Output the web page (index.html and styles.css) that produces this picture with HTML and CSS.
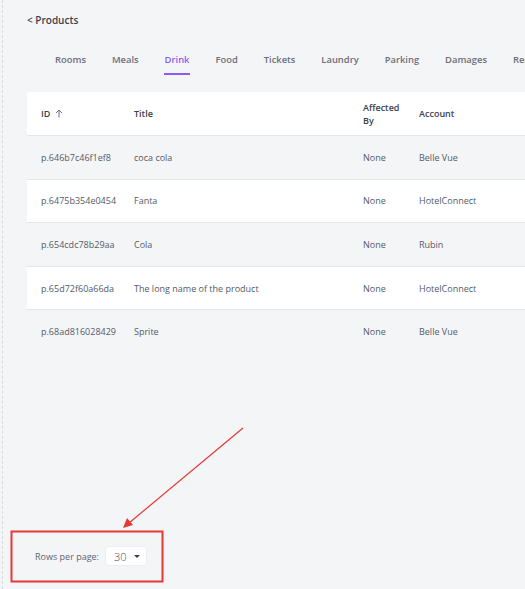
FILE: index.html
```html
<!DOCTYPE html>
<html lang="en">
<head>
<meta charset="utf-8">
<title>Products</title>
<link rel="stylesheet" href="styles.css">
</head>
<body>
<div class="page">
  <a class="back" href="#">&lt; Products</a>
  <nav class="tabs">
    <span class="tab">Rooms</span>
    <span class="tab">Meals</span>
    <span class="tab active">Drink</span>
    <span class="tab">Food</span>
    <span class="tab">Tickets</span>
    <span class="tab">Laundry</span>
    <span class="tab">Parking</span>
    <span class="tab">Damages</span>
    <span class="tab">Rent</span>
  </nav>
  <table class="grid">
    <colgroup>
      <col class="c-id"><col class="c-title"><col class="c-aff"><col class="c-acc">
    </colgroup>
    <thead>
      <tr><th>ID <svg class="sort" width="8" height="9" viewBox="0 0 8 9"><path d="M4 8.5V1M1 4L4 1L7 4" fill="none" stroke="#6b6f7b" stroke-width="1"/></svg></th><th>Title</th><th>Affected<br>By</th><th>Account</th></tr>
    </thead>
    <tbody>
      <tr><td>p.646b7c46f1ef8</td><td>coca cola</td><td>None</td><td>Belle Vue</td></tr>
      <tr><td>p.6475b354e0454</td><td>Fanta</td><td>None</td><td>HotelConnect</td></tr>
      <tr><td>p.654cdc78b29aa</td><td>Cola</td><td>None</td><td>Rubin</td></tr>
      <tr><td>p.65d72f60a66da</td><td>The long name of the product</td><td>None</td><td>HotelConnect</td></tr>
      <tr><td>p.68ad816028429</td><td>Sprite</td><td>None</td><td>Belle Vue</td></tr>
    </tbody>
  </table>
  <div class="pager">
    <span class="pager-label">Rows per page:</span>
    <span class="select">30 <span class="caret"></span></span>
  </div>
</div>
<svg class="annot" width="525" height="589" viewBox="0 0 525 589">
  <line x1="243" y1="428" x2="129" y2="523" stroke="#e53935" stroke-width="1.2"/>
  <polygon points="123,528 127,518 133,525" fill="#e53935"/>
  <rect x="11.5" y="531.5" width="151" height="50" fill="none" stroke="#e53935" stroke-width="2"/>
</svg>
</body>
</html>
```
FILE: styles.css
```css
html, body {
  margin: 0;
  padding: 0;
  height: 100%;
  overflow: hidden;
}
body {
  background: #f4f5f7;
  font-family: "Open Sans", "Liberation Sans", sans-serif;
  color: #3d4250;
  position: relative;
}
.page {
  box-sizing: border-box;
  height: 589px;
  margin-left: 2px;
  border-left: 1px dashed #d9dbe0;
  padding: 13px 0 23px 24px;
  display: flex;
  flex-direction: column;
  width: 700px;
}
.back {
  font-size: 10px;
  font-weight: 600;
  color: #3a3f4b;
  text-decoration: none;
  line-height: 14px;
}
.tabs {
  display: flex;
  gap: 24px;
  margin: 26px 0 0 27px;
}
.tab {
  font-size: 9.4px;
  font-weight: 600;
  color: #6b6f7b;
  padding: 0 1px 6px;
  line-height: 14px;
  border-bottom: 2px solid transparent;
}
.tab.active {
  color: #8b5cf6;
  border-bottom-color: #8b5cf6;
}
.grid {
  margin-top: 17px;
  width: 640px;
  border-collapse: collapse;
  table-layout: fixed;
  font-size: 9px;
}
.c-id { width: 93px; }
.c-title { width: 229px; }
.c-aff { width: 56px; }
.grid th {
  background: #ffffff;
  text-align: left;
  font-weight: 600;
  color: #3a3f4b;
  height: 43px;
  padding: 0 0 0 14px;
  line-height: 13px;
}
.grid td {
  height: 42.6px;
  padding: 0 0 0 14px;
  color: #555a66;
  border-top: 1px solid #e4e6ea;
  white-space: nowrap;
}
.grid tbody tr:nth-child(odd) td { background: #f4f5f7; }
.grid tbody tr:nth-child(even) td { background: #ffffff; }
.sort {
  margin-left: 2px;
  vertical-align: -1px;
}
.pager {
  margin-top: auto;
  display: flex;
  align-items: center;
  gap: 6px;
  padding-left: 8px;
}
.pager-label {
  font-size: 9px;
  color: #60646f;
}
.select {
  box-sizing: border-box;
  display: inline-flex;
  align-items: center;
  height: 20px;
  width: 42px;
  padding-left: 8px;
  background: #ffffff;
  border: 1px solid #eceef1;
  border-radius: 4px;
  font-size: 11px;
  font-weight: 300;
  color: #4a4f5b;
}
.caret {
  margin-left: 7px;
  width: 0;
  height: 0;
  border-left: 3px solid transparent;
  border-right: 3px solid transparent;
  border-top: 3px solid #3a3f4b;
}
.annot {
  position: absolute;
  left: 0;
  top: 0;
  pointer-events: none;
}
```
